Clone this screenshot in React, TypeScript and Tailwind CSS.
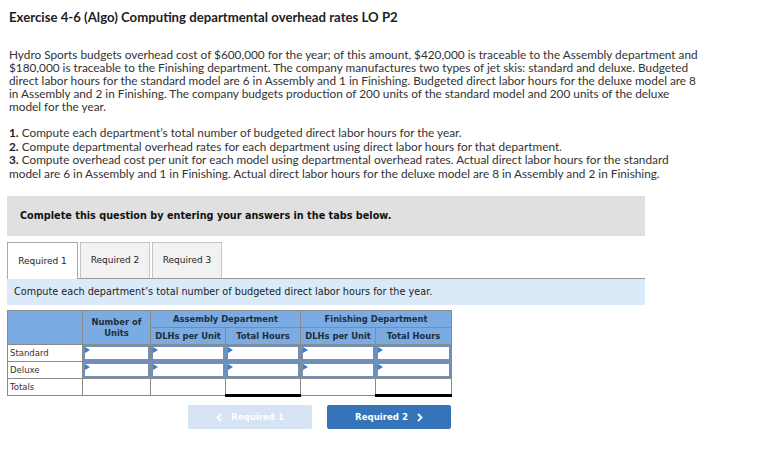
import React from "react";

const body = { fontFamily: "Lato, 'Open Sans', sans-serif" };
const verd = { fontFamily: "'DejaVu Sans', Verdana, sans-serif" };

const paraLines = [
  "Hydro Sports budgets overhead cost of $600,000 for the year; of this amount, $420,000 is traceable to the Assembly department and",
  "$180,000 is traceable to the Finishing department. The company manufactures two types of jet skis: standard and deluxe. Budgeted",
  "direct labor hours for the standard model are 6 in Assembly and 1 in Finishing. Budgeted direct labor hours for the deluxe model are 8",
  "in Assembly and 2 in Finishing. The company budgets production of 200 units of the standard model and 200 units of the deluxe",
  "model for the year.",
];

function Chevron({ left }: { left?: boolean }) {
  return (
    <svg width="6" height="9" viewBox="0 0 6 9" className="shrink-0">
      <path
        d={left ? "M5 1 L1.5 4.5 L5 8" : "M1 1 L4.5 4.5 L1 8"}
        fill="none"
        stroke="white"
        strokeWidth="1.8"
      />
    </svg>
  );
}

function InputCell() {
  return (
    <td className="border border-[#8a8a8a] p-0 h-[17px]">
      <div className="relative h-[16px] border-2 border-[#6f90bb] bg-white">
        <span className="absolute left-0 top-0 w-0 h-0 border-t-[3px] border-b-[3px] border-l-[5px] border-t-transparent border-b-transparent border-l-[#3d7cc9]" />
      </div>
    </td>
  );
}

function RowLabel({ children }: { children: React.ReactNode }) {
  return (
    <td className="border border-[#8a8a8a] px-[2px] text-[8.5px] text-[#333] text-left leading-none" style={verd}>
      {children}
    </td>
  );
}

export default function App() {
  return (
    <div className="w-[762px] h-[452px] bg-white text-[#222] overflow-hidden">
      <div className="px-[9px] pt-[8px]">
        <h1 className="text-[13.2px] font-bold leading-[18px] text-[#222] whitespace-nowrap" style={body}>
          Exercise 4-6 (Algo) Computing departmental overhead rates LO P2
        </h1>

        <div className="mt-[22px] text-[11.8px] leading-[13px] text-[#333]" style={body}>
          {paraLines.map((l, i) => (
            <p key={i} className="whitespace-nowrap">{l}</p>
          ))}
        </div>

        <div className="mt-[13px] text-[11.8px] leading-[13.6px] text-[#333]" style={body}>
          <p className="whitespace-nowrap">
            <b className="text-[#222]">1.</b> Compute each department’s total number of budgeted direct labor hours for the year.
          </p>
          <p className="whitespace-nowrap">
            <b className="text-[#222]">2.</b> Compute departmental overhead rates for each department using direct labor hours for that department.
          </p>
          <p className="whitespace-nowrap">
            <b className="text-[#222]">3.</b> Compute overhead cost per unit for each model using departmental overhead rates. Actual direct labor hours for the standard
          </p>
          <p className="whitespace-nowrap">
            model are 6 in Assembly and 1 in Finishing. Actual direct labor hours for the deluxe model are 8 in Assembly and 2 in Finishing.
          </p>
        </div>
      </div>

      <div className="ml-[7px] w-[638px]">
        <div className="mt-[16px] h-[40px] bg-[#e0e0e0] flex items-center pl-[13px]">
          <span className="text-[9.7px] font-bold text-[#111] whitespace-nowrap" style={verd}>
            Complete this question by entering your answers in the tabs below.
          </span>
        </div>

        <div className="mt-[5px] flex gap-[2px] items-end" style={verd}>
          <div className="w-[71px] h-[37px] border border-b-0 border-[#a8a8a8] bg-white flex items-center justify-center text-[9px] text-[#222] relative top-[1px]">
            Required 1
          </div>
          <div className="w-[70px] h-[36px] border border-b-0 border-[#c4c4c4] bg-[#f2f2f2] flex items-center justify-center text-[9px] text-[#222]">
            Required 2
          </div>
          <div className="w-[70px] h-[36px] border border-b-0 border-[#c4c4c4] bg-[#f2f2f2] flex items-center justify-center text-[9px] text-[#222]">
            Required 3
          </div>
        </div>
        <div className="h-[27px] border-t border-[#999] bg-[#daeaf9] flex items-center pl-[7px]" style={verd}>
          <span className="text-[9.7px] text-[#222] whitespace-nowrap">
            Compute each department’s total number of budgeted direct labor hours for the year.
          </span>
        </div>

        <table className="mt-[5px] border-collapse table-fixed w-[444px]" style={verd}>
          <colgroup>
            <col className="w-[75px]" />
            <col className="w-[68px]" />
            <col className="w-[75px]" />
            <col className="w-[75px]" />
            <col className="w-[75px]" />
            <col className="w-[76px]" />
          </colgroup>
          <thead>
            <tr className="h-[17px] bg-[#7aabe2] text-[8.4px] font-bold text-[#1f2d3d]">
              <th rowSpan={2} className="border border-[#8a8a8a]" />
              <th rowSpan={2} className="border border-[#8a8a8a] leading-[11px] align-middle font-bold">
                Number of
                <br />
                Units
              </th>
              <th colSpan={2} className="border border-[#8a8a8a] font-bold">Assembly Department</th>
              <th colSpan={2} className="border border-[#8a8a8a] font-bold">Finishing Department</th>
            </tr>
            <tr className="h-[17px] bg-[#7aabe2] text-[8.4px] font-bold text-[#1f2d3d]">
              <th className="border border-[#8a8a8a] font-bold">DLHs per Unit</th>
              <th className="border border-[#8a8a8a] font-bold">Total Hours</th>
              <th className="border border-[#8a8a8a] font-bold">DLHs per Unit</th>
              <th className="border border-[#8a8a8a] font-bold">Total Hours</th>
            </tr>
          </thead>
          <tbody>
            <tr className="h-[17px]">
              <RowLabel>Standard</RowLabel>
              <InputCell />
              <InputCell />
              <InputCell />
              <InputCell />
              <InputCell />
            </tr>
            <tr className="h-[17px]">
              <RowLabel>Deluxe</RowLabel>
              <InputCell />
              <InputCell />
              <InputCell />
              <InputCell />
              <InputCell />
            </tr>
            <tr className="h-[17px]">
              <RowLabel>Totals</RowLabel>
              <td className="border border-[#8a8a8a]" />
              <td className="border border-[#8a8a8a]" />
              <td className="border border-[#8a8a8a] border-t-black border-b-[3px] border-b-black" />
              <td className="border border-[#8a8a8a]" />
              <td className="border border-[#8a8a8a] border-t-black border-b-[3px] border-b-black" />
            </tr>
          </tbody>
        </table>

        <div className="mt-[8px] flex w-[444px] justify-end gap-[15px]" style={verd}>
          <button className="w-[124px] h-[24px] rounded-[2px] bg-[#d6e3f2] text-white text-[8.6px] font-bold flex items-center justify-center gap-[9px]">
            <Chevron left />
            <span>Required 1</span>
          </button>
          <button className="w-[124px] h-[24px] rounded-[2px] bg-[#3674b9] text-white text-[8.6px] font-bold flex items-center justify-center gap-[9px]">
            <span>Required 2</span>
            <Chevron />
          </button>
        </div>
      </div>
    </div>
  );
}
